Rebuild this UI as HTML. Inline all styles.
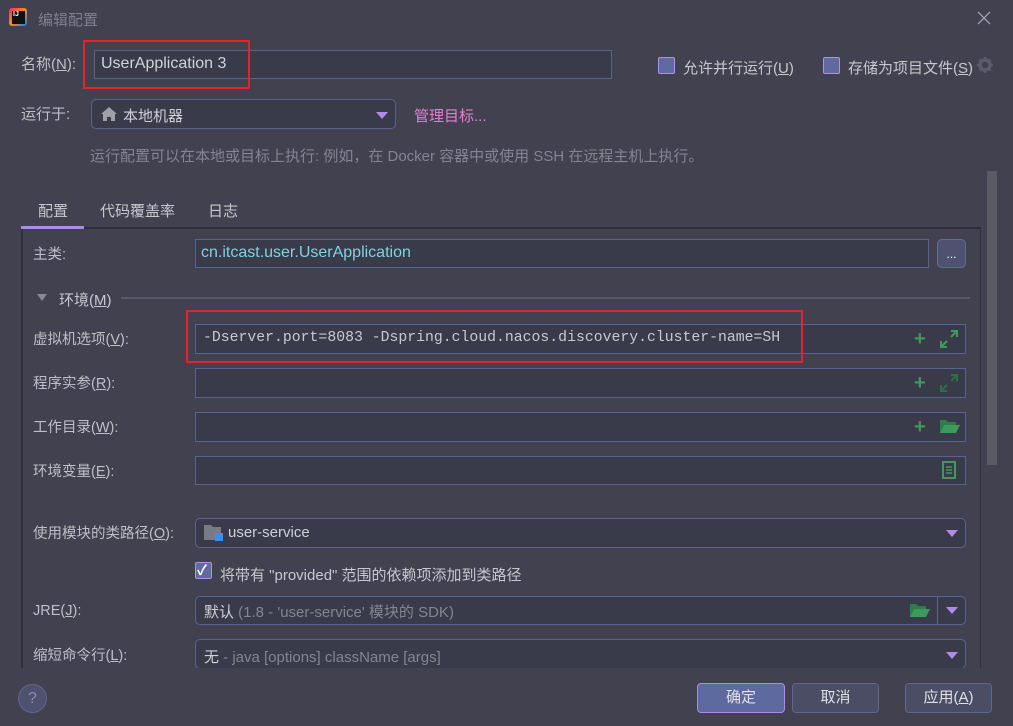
<!DOCTYPE html>
<html><head><meta charset="utf-8"><style>
*{box-sizing:border-box;margin:0;padding:0}
body{width:1013px;height:726px;overflow:hidden;background:#41414f;font-family:"Liberation Sans","Noto Sans CJK SC",sans-serif;font-size:14px;color:#c8c8cc;position:relative}
.a{position:absolute;white-space:nowrap}
.lbl{position:absolute;left:33px;line-height:20px;color:#bfbfc5;font-size:14.5px}
.in{position:absolute;background:#393a4a;border:1px solid #59648e}
.mono{font-family:"Liberation Mono","DejaVu Sans Mono",monospace}
.cb{position:absolute;width:17px;height:17px;border:1px solid #b48ee8;background:#5f6aa0;border-radius:2px}
.plus{position:absolute;color:#3d9a5a;font-size:20px;font-weight:bold;line-height:20px}
.tri{position:absolute;width:0;height:0;border-left:6px solid transparent;border-right:6px solid transparent;border-top:7px solid #b08ae8}
.btn{position:absolute;top:683px;height:30px;border:1px solid #5f6690;border-radius:4px;background:#4a4d63;text-align:center;line-height:28px;color:#e0e0e6;font-size:15px}
u{text-decoration:underline}
</style></head><body>
<!-- title -->
<div class="a" style="left:9px;top:8px;width:18px;height:18px;background:linear-gradient(135deg,#fe2857,#fc8c1b 50%,#087cfa);border-radius:3px"></div>
<div class="a" style="left:12px;top:11px;width:13px;height:13px;background:#111;color:#fff;font-size:7px;font-weight:bold;line-height:8px;padding-left:1px">IJ</div>
<div class="a" style="left:38px;top:9px;font-size:15px;color:#80808a">编辑配置</div>
<svg class="a" style="left:977px;top:11px" width="14" height="14"><path d="M1 1L13 13M13 1L1 13" stroke="#a0a0a8" stroke-width="1.3"/></svg>

<div class="lbl" style="left:21px;top:55px;font-size:15px">名称(<u>N</u>):</div>
<div class="in" style="left:94px;top:50px;width:518px;height:29px"></div>
<div class="a" style="left:101px;top:55px;font-size:16px;color:#d2d2d8">UserApplication 3</div>
<div class="a" style="left:83px;top:40px;width:167px;height:49px;border:2px solid #e8222b"></div>

<div class="cb" style="left:658px;top:57px"></div>
<div class="a" style="left:683px;top:57px;font-size:15px">允许并行运行(<u>U</u>)</div>
<div class="cb" style="left:823px;top:57px"></div>
<div class="a" style="left:848px;top:57px;font-size:15px">存储为项目文件(<u>S</u>)</div>
<svg class="a" style="left:977px;top:57px" width="17" height="17"><circle cx="8" cy="8" r="5" fill="none" stroke="#5c5c66" stroke-width="3.5"/><path d="M8 0v4M8 12v4M0 8h4M12 8h4M2.5 2.5l3 3M10.5 10.5l3 3M13.5 2.5l-3 3M2.5 13.5l3-3" stroke="#5c5c66" stroke-width="2.5"/></svg>

<div class="lbl" style="left:21px;top:105px;font-size:15px">运行于:</div>
<div class="in" style="left:91px;top:99px;width:305px;height:30px;border-radius:5px"></div>
<svg class="a" style="left:101px;top:107px" width="16" height="14"><path d="M8 0L0 7h2v7h4v-4h4v4h4V7h2z" fill="#a0a0a8"/></svg>
<div class="a" style="left:123px;top:105px;font-size:15px;color:#d0d0d6">本地机器</div>
<div class="tri" style="left:376px;top:112px"></div>
<div class="a" style="left:414px;top:105px;font-size:15px;color:#e87ed4">管理目标...</div>
<div class="a" style="left:90px;top:145px;font-size:15px;color:#85858f">运行配置可以在本地或目标上执行: 例如，在 Docker 容器中或使用 SSH 在远程主机上执行。</div>

<!-- scrollbar -->
<div class="a" style="left:987px;top:171px;width:10px;height:294px;background:#5b5b66"></div>

<!-- tabs -->
<div class="a" style="left:38px;top:200px;font-size:15px">配置</div>
<div class="a" style="left:100px;top:200px;font-size:15px">代码覆盖率</div>
<div class="a" style="left:208px;top:200px;font-size:15px">日志</div>
<div class="a" style="left:21px;top:227px;width:960px;border-left:2px solid #2e2f3a;border-top:2px solid #2e2f3a;border-right:1px solid #2e2f3a;height:441px"></div>
<div class="a" style="left:21px;top:226px;width:63px;height:3px;background:#b08ae8"></div>

<div class="lbl" style="top:245px">主类:</div>
<div class="in" style="left:195px;top:239px;width:734px;height:29px"></div>
<div class="a" style="left:201px;top:244px;font-size:16px;color:#7fd3e0">cn.itcast.user.UserApplication</div>
<div class="a" style="left:937px;top:239px;width:29px;height:29px;border:1px solid #5f6aa0;border-radius:5px;background:#4e5270;color:#fff;text-align:center;font-size:12px;line-height:28px">...</div>

<div class="tri" style="left:37px;top:294px;border-top-color:#8a8a95;border-width:7px 5px 0"></div>
<div class="a" style="left:59px;top:289px;font-size:15px">环境(<u>M</u>)</div>
<div class="a" style="left:121px;top:297px;width:849px;height:2px;background:#5a5a63"></div>

<div class="lbl" style="top:330px">虚拟机选项(<u>V</u>):</div>
<div class="in" style="left:195px;top:324px;width:771px;height:30px"></div>
<div class="a mono" style="left:203px;top:330px;font-size:14.8px;color:#c9c9cf">-Dserver.port=8083 -Dspring.cloud.nacos.discovery.cluster-name=SH</div>
<div class="a" style="left:186px;top:310px;width:617px;height:53px;border:2px solid #e8222b"></div>
<div class="plus" style="left:914px;top:329px">+</div>
<svg class="a" style="left:940px;top:330px" width="18" height="18"><path d="M11 1h6v6M17 1l-6 6M1 11v6h6M1 17l6-6" stroke="#3d9a5a" stroke-width="2" fill="none"/></svg>

<div class="lbl" style="top:374px">程序实参(<u>R</u>):</div>
<div class="in" style="left:195px;top:368px;width:771px;height:30px"></div>
<div class="plus" style="left:914px;top:373px">+</div>
<svg class="a" style="left:940px;top:374px" width="18" height="18"><path d="M11 1h6v6M17 1l-6 6M1 11v6h6M1 17l6-6" stroke="#2d6e45" stroke-width="2" fill="none"/></svg>

<div class="lbl" style="top:418px">工作目录(<u>W</u>):</div>
<div class="in" style="left:195px;top:412px;width:771px;height:30px"></div>
<div class="plus" style="left:914px;top:417px">+</div>
<svg class="a" style="left:940px;top:419px" width="20" height="15"><path d="M0 1h6l2 2h8v3H4L0 14z" fill="#2f7d48"/><path d="M4 6h16l-4 8H0z" fill="#3d9a5a"/></svg>

<div class="lbl" style="top:462px">环境变量(<u>E</u>):</div>
<div class="in" style="left:195px;top:456px;width:771px;height:29px"></div>
<svg class="a" style="left:942px;top:461px" width="14" height="18"><rect x="1" y="1" width="12" height="16" fill="none" stroke="#3d9a5a" stroke-width="2"/><path d="M4 6h6M4 9h6M4 12h6" stroke="#3d9a5a" stroke-width="1.5"/></svg>

<div class="lbl" style="top:524px">使用模块的类路径(<u>O</u>):</div>
<div class="in" style="left:195px;top:518px;width:771px;height:30px;border-radius:5px"></div>
<svg class="a" style="left:204px;top:525px" width="20" height="17"><path d="M0 0h7l2 2h8v13H0z" fill="#7a7a85"/><rect x="11" y="8" width="8" height="8" fill="#3e8ef0"/></svg>
<div class="a" style="left:228px;top:524px;font-size:15px;color:#d0d0d6">user-service</div>
<div class="tri" style="left:946px;top:530px"></div>

<div class="cb" style="left:195px;top:562px"></div>
<div class="a" style="left:197px;top:560px;color:#fff;font-size:14px;font-weight:bold">✓</div>
<div class="a" style="left:220px;top:564px;font-size:15px">将带有 "provided" 范围的依赖项添加到类路径</div>

<div class="lbl" style="top:601px">JRE(<u>J</u>):</div>
<div class="in" style="left:195px;top:596px;width:771px;height:29px;border-radius:5px"></div>
<div class="a" style="left:937px;top:597px;width:1px;height:27px;background:#59648e"></div>
<div class="a" style="left:204px;top:601px;font-size:15px;color:#d0d0d6">默认 <span style="color:#85858f">(1.8 - 'user-service' 模块的 SDK)</span></div>
<svg class="a" style="left:910px;top:603px" width="20" height="15"><path d="M0 1h6l2 2h8v3H4L0 14z" fill="#2f7d48"/><path d="M4 6h16l-4 8H0z" fill="#3d9a5a"/></svg>
<div class="tri" style="left:946px;top:607px"></div>

<div class="lbl" style="top:646px">缩短命令行(<u>L</u>):</div>
<div class="in" style="left:195px;top:639px;width:771px;height:30px;border-radius:5px"></div>
<div class="a" style="left:204px;top:646px;font-size:15px;color:#d0d0d6">无 <span style="color:#85858f">- java [options] className [args]</span></div>
<div class="tri" style="left:946px;top:652px"></div>
<div class="a" style="left:0;top:668px;width:1013px;height:58px;background:#41414f"></div>

<!-- bottom -->
<div class="a" style="left:18px;top:684px;width:29px;height:29px;border-radius:50%;background:#4e5270;border:1px solid #5f6690;color:#8a8ea8;text-align:center;line-height:27px;font-size:16px">?</div>
<div class="btn" style="left:697px;width:88px;background:#5c6aa0;border-color:#b08ae8">确定</div>
<div class="btn" style="left:792px;width:87px">取消</div>
<div class="btn" style="left:905px;width:87px">应用(<u>A</u>)</div>
</body></html>
